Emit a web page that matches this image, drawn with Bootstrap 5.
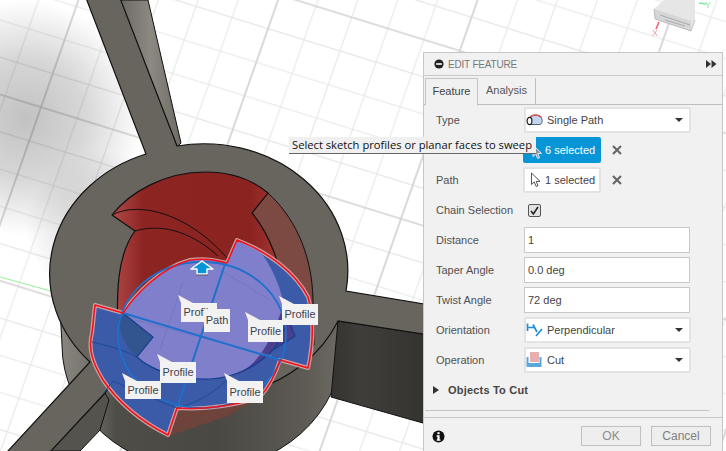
<!DOCTYPE html>
<html lang="en">
<head>
<meta charset="utf-8">
<title>Edit Feature</title>
<link href="https://cdn.jsdelivr.net/npm/bootstrap@5.3.0/dist/css/bootstrap.min.css" rel="stylesheet">
<style>
html,body{margin:0;height:100%;overflow:hidden;background:#fff;}
body{font-family:"Liberation Sans",Arial,sans-serif;font-size:11px;color:#444;}
.stage{position:relative;width:726px;height:451px;overflow:hidden;}
.scene{position:absolute;left:0;top:0;display:block;}
.pin{position:absolute;background:#f2f2f2;color:#3f3f4c;font-size:11px;line-height:1;display:flex;align-items:center;justify-content:center;}
.pin-tail{position:absolute;left:-3px;top:-8px;width:15px;height:8px;background:#f4eeee;clip-path:polygon(0 0,100% 100%,20% 100%);}
.tip{position:absolute;left:289px;top:137px;width:247px;height:17px;background:#f0f0f0;border-bottom:1px solid #666;color:#111;font-family:"Open Sans","Liberation Sans",sans-serif;font-size:11.2px;line-height:16px;padding-left:3px;white-space:nowrap;z-index:5;}
.panel-cad{position:absolute;left:423px;top:52px;width:300px;height:410px;background:#f1f1f1;border:1px solid #c6c6c6;}
.head-cad{height:23px;padding:0 5px 0 10px;border-bottom:1px solid #c9c9c9;color:#777;font-size:10px;letter-spacing:-.2px;}
.tabs-cad{height:29px;border-bottom:1px solid #bdbdbd;padding-left:1px;padding-top:2px;flex-wrap:nowrap;}
.tabs-cad .nav-link{height:27px;padding:0 6px;line-height:25px;font-size:11px;color:#555;border:0;border-right:1px solid #bdbdbd;border-radius:0;background:transparent;width:58px;text-align:center;}
.tabs-cad .nav-link.active{width:53px;height:28px;background:#f1f1f1;color:#444;border:1px solid #c4c4c4;border-bottom:1px solid #f1f1f1;margin-bottom:-1px;}
.rows-cad{padding:0 0 0 12px;}
.row-cad{height:30px;display:flex;align-items:center;}
.lab-cad{width:88px;flex:none;color:#505050;font-size:11px;}
.box-cad{height:26px;width:167px;background:#fff;border:2px solid #e3e3e3;border-radius:2px;padding:0 6px 0 0;font-size:11px;color:#444;display:flex;align-items:center;gap:4px;}
.caret-cad{margin-left:auto;width:0;height:0;border-left:4px solid transparent;border-right:4px solid transparent;border-top:4px solid #333;}
.pick-cad{width:78px;margin-left:-1px;padding:0 0 0 5px;gap:4px;}
.pick-on{background:#0696d7;border-color:#0696d7;color:#fff;padding-left:20px;}
.x-cad{margin-left:11px;width:10px;height:10px;display:block;}
.input-cad{height:26px;width:166px;flex:none;border:1px solid #c8c8c8;border-radius:0;padding:0 3px;font-size:11px;color:#444;background:#fff;line-height:1;}
.input-cad:focus{box-shadow:none;border-color:#c8c8c8;}
.check-cad.form-check-input{width:13px;height:13px;margin:0 0 0 4px;border:1px solid #555;border-radius:2px;background-color:#e2e2e2;background-size:13px;background-image:url("data:image/svg+xml,%3Csvg xmlns='http://www.w3.org/2000/svg' viewBox='0 0 13 13'%3E%3Cpath d='M3 7l2.4 3L10 3' fill='none' stroke='%23222' stroke-width='1.6'/%3E%3C/svg%3E");}
.objects-cad{height:30px;font-weight:700;font-size:11px;color:#444;letter-spacing:.2px;gap:9px;}
.tri-cad{width:0;height:0;margin-left:-3px;border-top:4px solid transparent;border-bottom:4px solid transparent;border-left:6px solid #333;}
.rule-cad{margin:5px 13px 0 1px;border:0;border-top:1px solid #c4c4c4;opacity:1;height:0;}
.foot-cad{margin-top:6px;border-top:1px solid #c9c9c9;height:40px;padding:8px 11px 0 8px;gap:10px;}
.btn-cad{height:20px;width:60px;padding:0;font-size:12px;line-height:18px;background:#eee;border:1px solid #c0c0c0;border-radius:0;color:#808080;}
.btn-cad:disabled{background:#eee;border-color:#c0c0c0;color:#8c8c8c;opacity:1;}
</style>
</head>
<body>
<div class="stage">
<svg class="scene" width="726" height="451" viewBox="0 0 726 451" xmlns="http://www.w3.org/2000/svg">
<defs>
<pattern id="grid" patternUnits="userSpaceOnUse" width="180" height="168" patternTransform="matrix(1 .31 -.35 1 221 163)">
<path d="M36 0V168M72 0V168M108 0V168M144 0V168M0 33.6H180M0 67.2H180M0 100.8H180M0 134.4H180" stroke="#e6e6e6" stroke-width="1" fill="none"/>
<path d="M0 0V168M180 0V168M0 0H180M0 168H180" stroke="#d2d2d2" stroke-width="1.6" fill="none"/>
</pattern>
<radialGradient id="sh1" gradientUnits="userSpaceOnUse" cx="25" cy="118" r="118"><stop offset="0" stop-color="#000" stop-opacity=".24"/><stop offset=".5" stop-color="#000" stop-opacity=".16"/><stop offset="1" stop-color="#000" stop-opacity="0"/></radialGradient>
<radialGradient id="sh2" gradientUnits="userSpaceOnUse" cx="100" cy="225" r="75"><stop offset=".3" stop-color="#000" stop-opacity=".14"/><stop offset="1" stop-color="#000" stop-opacity="0"/></radialGradient>
<linearGradient id="cyl" x1="0" x2="1" y1="0" y2="0"><stop offset="0" stop-color="#8a8880"/><stop offset=".1" stop-color="#77756d"/><stop offset=".2" stop-color="#4f4d47"/><stop offset=".55" stop-color="#4a4842"/><stop offset=".85" stop-color="#5c5a53"/><stop offset="1" stop-color="#6e6c64"/></linearGradient>
<linearGradient id="side" x1="0" x2="1" y1="0" y2="0"><stop offset="0" stop-color="#35332f"/><stop offset=".3" stop-color="#403e3a"/><stop offset="1" stop-color="#34322e"/></linearGradient>
<linearGradient id="armlit" x1="0" x2="1" y1="0" y2="0"><stop offset="0" stop-color="#6b6963"/><stop offset=".5" stop-color="#8b8981"/><stop offset="1" stop-color="#6d6b63"/></linearGradient>
<linearGradient id="wall" x1="0" x2="1" y1="0" y2="0"><stop offset="0" stop-color="#b04a48"/><stop offset=".18" stop-color="#8c2422"/><stop offset=".8" stop-color="#8b2321"/><stop offset="1" stop-color="#a83a36"/></linearGradient>
<filter id="bl"><feGaussianBlur stdDeviation=".6"/></filter>
</defs>
<rect width="726" height="451" fill="#fff"/>
<rect width="726" height="451" fill="url(#grid)"/>
<rect width="726" height="451" fill="url(#sh1)"/>
<rect width="726" height="451" fill="url(#sh2)"/>
<path d="M0 277L58 293" stroke="#9af09a" stroke-width="1.2"/>

<!-- view cube -->
<g filter="url(#bl)">
<path d="M654 9L664 0H695V20L691 31L655 19Z" fill="#e6e6e6"/>
<path d="M654 9L691 21L691 31L655 19Z" fill="#d6d6d6"/>
<path d="M660 15L690 25M665 20L685 26" stroke="#999" stroke-width=".7"/>
<path d="M654 9L655 19L691 31L695 20" stroke="#aaa" stroke-width=".7" fill="none"/>
<path d="M659 22L656 29" stroke="#f06070" stroke-width="1.6"/>
<path d="M699 3L706 4" stroke="#7fe89a" stroke-width="1.6"/>
<text x="652" y="36" font-family="Liberation Sans" font-size="9" fill="#f59aa0">X</text>
<text x="705" y="8" font-family="Liberation Sans" font-size="9" fill="#8fe8a4">Y</text>
</g>

<!-- top arm's lit side -->
<path d="M120 0H148L181 143L177 147Z" fill="url(#armlit)" stroke="#111" stroke-width="1"/>
<!-- hub wall -->
<path d="M58 270L62 345A140 125 0 0 0 342 345L346 285Z" fill="url(#cyl)" stroke="#111" stroke-width="1"/>
<!-- arm sides -->
<path d="M105 393L50 451H80L100 430L109 400Z" fill="#55534d" stroke="#111" stroke-width="1"/>
<path d="M338 321L430 335V425L331 397Z" fill="url(#side)" stroke="#111" stroke-width="1"/>
<!-- top face: hub with its three arms -->
<path d="M86 -2L146 154A144 127 0 0 0 90 362L7 452H50L105 393L120 372A144 127 0 0 0 338 321L430 335V305L346 291A144 127 0 0 0 177 146L120 -2Z" fill="#67655e" stroke="#111" stroke-width="1.2" stroke-linejoin="miter"/>

<!-- hole -->
<path d="M268 193C292 215 312 250 313 300L314 345L300 360L285 300L265 240L252 213Z" fill="#7c4a42" stroke="#111" stroke-width="1"/>
<path d="M112 215C130 192 165 172 205 172C235 172 255 182 268 193L252 213C268 232 282 265 285 300L280 350H118C116 290 117 255 135 231Z" fill="url(#wall)" stroke="#111" stroke-width="1.2" stroke-linejoin="round"/>
<path d="M112 215C140 200 190 215 227 258M135 231C165 222 195 235 218 256" stroke="#111" stroke-width="1" fill="none"/>
<path d="M178 408L168 436L228 416L260 397Z" fill="#6e433b"/>

<!-- selected profile -->
<path d="M237 240C268 252 295 272 308 297C314 318 314 340 308 368L280 360C275 376 268 388 260 397C238 405 205 410 177 408L168 435C138 420 118 402 103 380C92 362 88 348 92 333L95 305L123 313C135 295 160 268 190 260C205 258 215 260 227 263Z" fill="#3b5ba8" stroke="#c9a2a2" stroke-width="4" stroke-linejoin="round"/>
<path d="M123 313L153 337L137 357C128 350 120 335 118 320Z" fill="#32558f"/>
<path d="M123 313L153 337L137 357C150 370 180 380 210 379C235 378 258 365 273 350C284 335 288 320 285 313C284 295 272 265 260 252L237 240L227 263C215 260 205 258 190 260C160 268 135 295 123 313Z" fill="#807fcb"/>
<path d="M285 300L295 336L273 350C262 362 248 372 232 376C250 370 268 355 285 300Z" fill="#4c3f8e"/>
<path d="M92 342C105 345 125 350 137 357M103 394L113 381C135 390 155 400 177 408M177 408C200 402 215 392 230 377" stroke="#1e4a96" stroke-width="1" fill="none"/>
<path d="M123 313L153 337L137 357C150 370 180 380 210 379C235 378 258 365 273 350C284 335 288 320 285 313M285 313L295 336L273 350" stroke="#153f8f" stroke-width="1.2" fill="none"/>
<path d="M183 282L160 350M135 320L272 356M220 270L270 300" stroke="#7473bb" stroke-width=".8" fill="none"/>
<ellipse cx="202" cy="335" rx="84" ry="73" fill="none" stroke="#1e70cc" stroke-width="1.8"/>
<path d="M123 313L280 360M225 264L177 408" stroke="#1e70cc" stroke-width="2" fill="none"/>
<path d="M237 240C268 252 295 272 308 297C314 318 314 340 308 368L280 360C275 376 268 388 260 397C238 405 205 410 177 408L168 435C138 420 118 402 103 380C92 362 88 348 92 333L95 305L123 313C135 295 160 268 190 260C205 258 215 260 227 263Z" fill="none" stroke="#f0121e" stroke-width="1.6" stroke-linejoin="round"/>
<!-- up arrow -->
<path d="M202 261L213 269H207V274H197V269H191Z" fill="#0696d7" stroke="#fff" stroke-width="1.4" stroke-linejoin="round"/>
<path d="M196 275H208" stroke="#444" stroke-width=".7"/>
</svg>

<div class="pin" style="left:181px;top:303px;width:36px;height:19px"><i class="pin-tail"></i>Profile</div>
<div class="pin" style="left:204px;top:309px;width:26px;height:23px">Path</div>
<div class="pin" style="left:248px;top:320px;width:35px;height:22px"><i class="pin-tail"></i>Profile</div>
<div class="pin" style="left:282px;top:304px;width:36px;height:21px"><i class="pin-tail"></i>Profile</div>
<div class="pin" style="left:160px;top:362px;width:36px;height:21px"><i class="pin-tail"></i>Profile</div>
<div class="pin" style="left:125px;top:381px;width:36px;height:18px"><i class="pin-tail"></i>Profile</div>
<div class="pin" style="left:227px;top:381px;width:36px;height:22px"><i class="pin-tail"></i>Profile</div>

<section class="panel-cad d-flex flex-column">
  <div class="head-cad d-flex align-items-center gap-1">
    <svg width="10" height="10" viewBox="0 0 10 10"><circle cx="5" cy="5" r="4.6" fill="#222"/><rect x="2.2" y="4.1" width="5.6" height="1.8" fill="#eee"/></svg>
    <span>EDIT FEATURE</span>
    <svg class="ms-auto" width="11" height="8" viewBox="0 0 11 8"><path d="M0 0L5 4L0 8ZM5.5 0L10.5 4L5.5 8Z" fill="#333"/></svg>
  </div>
  <ul class="nav tabs-cad">
    <li class="nav-item"><a class="nav-link active" href="#">Feature</a></li>
    <li class="nav-item"><a class="nav-link" href="#">Analysis</a></li>
  </ul>
  <div class="rows-cad">
    <div class="row-cad"><span class="lab-cad">Type</span>
      <div class="box-cad">
        <svg width="17" height="12" viewBox="0 0 17 12"><path d="M4 3C7 .5 13 .5 15.5 4C17 7 16 10 14 10.5H5Z" fill="#c3d6ee" stroke="#51627a" stroke-width="1"/><path d="M4 3C7 .3 13 .3 15.5 3.5" fill="none" stroke="#d9534f" stroke-width="1.4"/><ellipse cx="3.5" cy="7" rx="2.4" ry="3.6" fill="#fff" stroke="#222" stroke-width="1.2"/></svg>
        <span>Single Path</span><i class="caret-cad"></i>
      </div>
    </div>
    <div class="row-cad"><span class="lab-cad"></span>
      <div class="box-cad pick-cad pick-on">6 selected</div>
      <svg class="x-cad" viewBox="0 0 10 10"><path d="M1 1L9 9M9 1L1 9" stroke="#666" stroke-width="2.1"/></svg>
    </div>
    <div class="row-cad"><span class="lab-cad">Path</span>
      <div class="box-cad pick-cad">
        <svg width="11" height="16" viewBox="0 0 11 16"><path d="M1.5 1L1.5 12.5L4.3 10L6.2 14.5L8 13.7L6.2 9.5L10 9.3Z" fill="#fff" stroke="#555" stroke-width="1"/></svg>
        <span>1 selected</span>
      </div>
      <svg class="x-cad" viewBox="0 0 10 10"><path d="M1 1L9 9M9 1L1 9" stroke="#666" stroke-width="2.1"/></svg>
    </div>
    <div class="row-cad"><label class="lab-cad" for="chain-cad">Chain Selection</label>
      <input id="chain-cad" class="form-check-input check-cad" type="checkbox" checked>
    </div>
    <div class="row-cad"><label class="lab-cad" for="dist-cad">Distance</label><input id="dist-cad" class="form-control input-cad" value="1"></div>
    <div class="row-cad"><label class="lab-cad" for="taper-cad">Taper Angle</label><input id="taper-cad" class="form-control input-cad" value="0.0 deg"></div>
    <div class="row-cad"><label class="lab-cad" for="twist-cad">Twist Angle</label><input id="twist-cad" class="form-control input-cad" value="72 deg"></div>
    <div class="row-cad"><span class="lab-cad">Orientation</span>
      <div class="box-cad">
        <svg width="17" height="14" viewBox="0 0 17 14"><path d="M1.5 .5V8M1.5 4.5H8M7 1.5L11 9M10 13L16 6" fill="none" stroke="#1f8fd8" stroke-width="1.7"/></svg>
        <span>Perpendicular</span><i class="caret-cad"></i>
      </div>
    </div>
    <div class="row-cad"><span class="lab-cad">Operation</span>
      <div class="box-cad">
        <svg width="17" height="16" viewBox="0 0 17 16"><rect x="4" y="0" width="9" height="10" fill="#e9aeb0"/><path d="M.5 5V15H15.5V5H13.5V11H2.5V5Z" fill="#5aa8dc"/></svg>
        <span>Cut</span><i class="caret-cad"></i>
      </div>
    </div>
    <div class="row-cad objects-cad"><i class="tri-cad"></i><span>Objects To Cut</span></div>
  </div>
  <hr class="rule-cad">
  <div class="foot-cad d-flex align-items-start">
    <svg class="mt-1" width="13" height="13" viewBox="0 0 13 13"><circle cx="6.5" cy="6.5" r="6" fill="#111"/><rect x="5.4" y="2.2" width="2.2" height="2" fill="#fff"/><path d="M4.6 5.3H7.6V9.4H8.5V10.8H4.6V9.4H5.4V6.7H4.6Z" fill="#fff"/></svg>
    <button class="btn btn-cad ms-auto" disabled>OK</button>
    <button class="btn btn-cad">Cancel</button>
  </div>
</section>
<svg class="scene" style="left:531px;top:144px;z-index:4" width="12" height="16" viewBox="0 0 11 16"><path d="M1.5 1L1.5 12.5L4.3 10L6.2 14.5L8 13.7L6.2 9.5L10 9.3Z" fill="#8a97a0" stroke="#e4eef4" stroke-width="1"/></svg>
<div class="tip">Select sketch profiles or planar faces to sweep</div>
</div>
<script src="https://cdn.jsdelivr.net/npm/bootstrap@5.3.0/dist/js/bootstrap.bundle.min.js"></script>
</body>
</html>
